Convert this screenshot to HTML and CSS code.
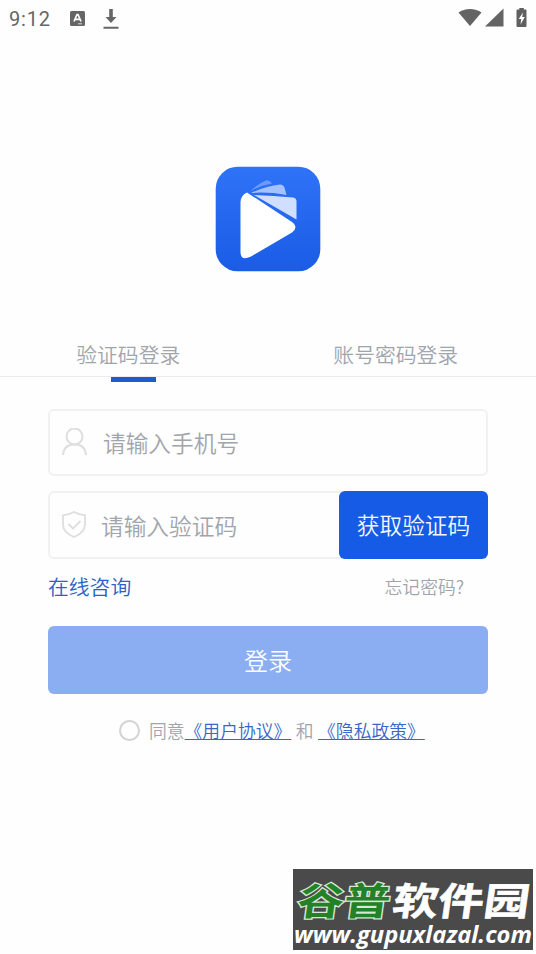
FILE: index.html
```html
<!DOCTYPE html>
<html lang="zh-CN">
<head>
<meta charset="UTF-8">
<title>登录</title>
<link rel="stylesheet" href="styles.css">
</head>
<body>
<header class="status">
  <span class="clock">9:12</span>
  <svg class="app-icon" width="15" height="15" viewBox="0 0 15 15"><rect width="15" height="15" rx="1.5" fill="#666"/><path d="M4 10.5 7 3.5h1l3 7M5 8.3h5" fill="none" stroke="#fff" stroke-width="1.7"/><path d="M8 12.8h4" stroke="#ddd"/></svg>
  <svg class="download" width="16" height="21" viewBox="0 0 16 21"><path d="M6.2 0h3.6v8h3.7L8 14 2.5 8h3.7zM.5 17.8h15v1.9H.5z" fill="#666"/></svg>
  <svg class="signals" width="70" height="22" viewBox="0 0 70 22"><path d="M.5 4.5C6.500-.2 17.500-.2 23.500 4.500L12 18z" fill="#646464"/><path d="M45.500.5V18.500H27z" fill="#646464"/><path d="M59.500 1.500h1.800V0h4.500v1.500h1.700q1 0 1 1v15.500q0 1-1 1h-8q-1 0-1-1V2.500q0-1 1-1z" fill="#606060"/><path d="M65 4.500 60.700 11h2.500l-.7 5.500L66.800 9h-2.600z" fill="#fff"/></svg>
</header>
<main>
  <svg class="logo" width="106" height="106" viewBox="0 0 106 106">
    <defs><linearGradient id="blue" x1="0" y1="0" x2="0" y2="1"><stop offset="0" stop-color="#2f73f8"/><stop offset="1" stop-color="#1a5ce5"/></linearGradient></defs>
    <rect x=".7" y=".7" width="104.600" height="104.600" rx="22" fill="url(#blue)"/>
    <path d="M35 25.500Q43 17.500 51 14.500Q54 13.500 57 17.500Q45 19.500 35 25.500z" fill="#6c9bfa"/>
    <path d="M36 27Q51 20 65 18.500Q68 18.500 69.500 21.500L71.500 29Q53 25.500 36 27z" fill="#a4c2fd"/>
    <path d="M39 29Q58 29.500 78 31.500Q81.500 32 81.500 35.500V53.500z" fill="#d0dfff"/>
    <path d="M32 26.500 77 56Q84 60.500 77 66.500L36 90.500Q25.500 95.500 25.500 86V36Q26 29 32 26.500z" fill="#fff"/>
  </svg>
  <nav class="tabs">
    <div class="tab active">验证码登录</div>
    <div class="tab">账号密码登录</div>
  </nav>
  <form class="form">
    <div class="field">
      <svg width="28" height="30" viewBox="0 0 28 30" fill="none" stroke="#dedede" stroke-width="2"><circle cx="13.500" cy="8.500" r="8"/><path d="M2 27C2.500 20 7 16.500 13.500 16.500S24.500 20 25 27"/></svg>
      <span class="hint">请输入手机号</span>
    </div>
    <div class="field code">
      <svg width="26" height="28" viewBox="0 0 26 28" fill="none" stroke="#dedede" stroke-width="1.800"><path d="M13 1Q18.500 4 24 4.300V13.500Q24 21.500 13 26Q2 21.500 2 13.500V4.300Q7.500 4 13 1z"/><path d="m7.500 13 4.500 4.500 7.500-7.500"/></svg>
      <span class="hint">请输入验证码</span>
      <div class="get-code">获取验证码</div>
    </div>
    <div class="links"><span class="consult">在线咨询</span><span class="forgot">忘记密码?</span></div>
    <div class="submit">登录</div>
    <div class="agree"><span class="radio"></span><span>同意</span><span class="policy">《用户协议》</span><span class="and">和</span><span class="policy">《隐私政策》</span></div>
  </form>
</main>
<footer class="mark">
  <svg width="240" height="81" viewBox="0 0 240 81">
    <g class="mark-title">
      <text class="green" transform="translate(3 46) skewX(-8) scale(1.22 1)">谷普</text>
      <text class="white" transform="translate(98 46) skewX(-8) scale(1.2 1)">软件园</text>
    </g>
    <text class="url" x="1" y="74" textLength="238" lengthAdjust="spacingAndGlyphs">www.gupuxlazal.com</text>
  </svg>
</footer>
</body>
</html>
```
FILE: styles.css
```css
* { box-sizing: border-box; }
body {
  margin: 0;
  height: 954px;
  overflow: hidden;
  display: flex;
  flex-direction: column;
  background: #fefefe;
  color: #a0a5ab;
  font-family: "Noto Sans CJK SC", sans-serif;
  font-weight: 350;
}
svg { display: block; flex: none; }
.status {
  height: 38px;
  display: flex;
  align-items: flex-start;
  padding: 8px 9px 0;
}
.clock {
  width: 61px;
  font: 20px/22px Roboto, sans-serif;
  letter-spacing: .8px;
  color: #666;
}
.app-icon { margin-top: 3px; }
.download { margin: 1px 0 0 18px; }
.signals { margin: 0 -1px 0 auto; }
main { flex: 1; }
.logo { margin: 128px auto 0 214.600px; }
.tabs {
  display: flex;
  height: 51px;
  margin-top: 54px;
  border-bottom: 1px solid #ebebec;
}
.tab {
  position: relative;
  flex: 1;
  padding-top: 13px;
  text-align: center;
  font-size: 20.800px;
  line-height: 30px;
}
.tab:first-child { padding-right: 11px; }
.tab:last-child { padding-right: 12px; }
.tab.active::after {
  content: "";
  position: absolute;
  left: 111px;
  top: 51px;
  width: 45px;
  height: 5px;
  background: #1e5bd0;
}
.form { padding: 32px 48px 0; }
.field {
  height: 67px;
  display: flex;
  align-items: center;
  padding-left: 11px;
  border: 2px solid #f1f1f2;
  border-radius: 6px;
}
.hint { font-size: 22.700px; margin-left: 14px; }
.code { height: 68px; margin-top: 15px; }
.code .hint { margin-left: 14px; }
.get-code {
  width: 149px;
  height: 68px;
  margin: -2px -2px -2px auto;
  border-radius: 6px;
  background: #165be5;
  color: #f2f7ff;
  font-size: 22.700px;
  line-height: 68px;
  text-align: center;
}
.links {
  height: 67px;
  display: flex;
  justify-content: space-between;
  padding: 12px 24px 0 0;
  line-height: 30px;
}
.consult { color: #2c60c8; font-size: 20.800px; }
.forgot { font-size: 17.800px; }
.submit {
  height: 68px;
  border-radius: 6px;
  background: #8badf1;
  color: #fcfdff;
  text-align: center;
  font-size: 24px;
  line-height: 67px;
}
.agree {
  display: flex;
  align-items: center;
  margin-top: 21px;
  padding-left: 71px;
  font-size: 17.800px;
  line-height: 30px;
  white-space: nowrap;
}
.radio {
  width: 21px;
  height: 21px;
  margin-right: 9px;
  border: 2px solid #d3d3d3;
  border-radius: 50%;
}
.policy { color: #3767c8; text-decoration: underline; text-decoration-thickness: 1px; }
.and { margin: 0 4.500px; }
.mark {
  width: 240px;
  height: 81px;
  margin: 0 0 4px 293px;
  background: #4a4a4a;
}
.mark-title { font-size: 38px; font-weight: 700; }
.green { fill: #238126; stroke: #d6e8d4; stroke-width: 2.500px; paint-order: stroke; }
.white { fill: #fff; stroke: #fff; stroke-width: .6px; }
.url { fill: #fff; font: italic 700 24px "Open Sans", sans-serif; }
```
